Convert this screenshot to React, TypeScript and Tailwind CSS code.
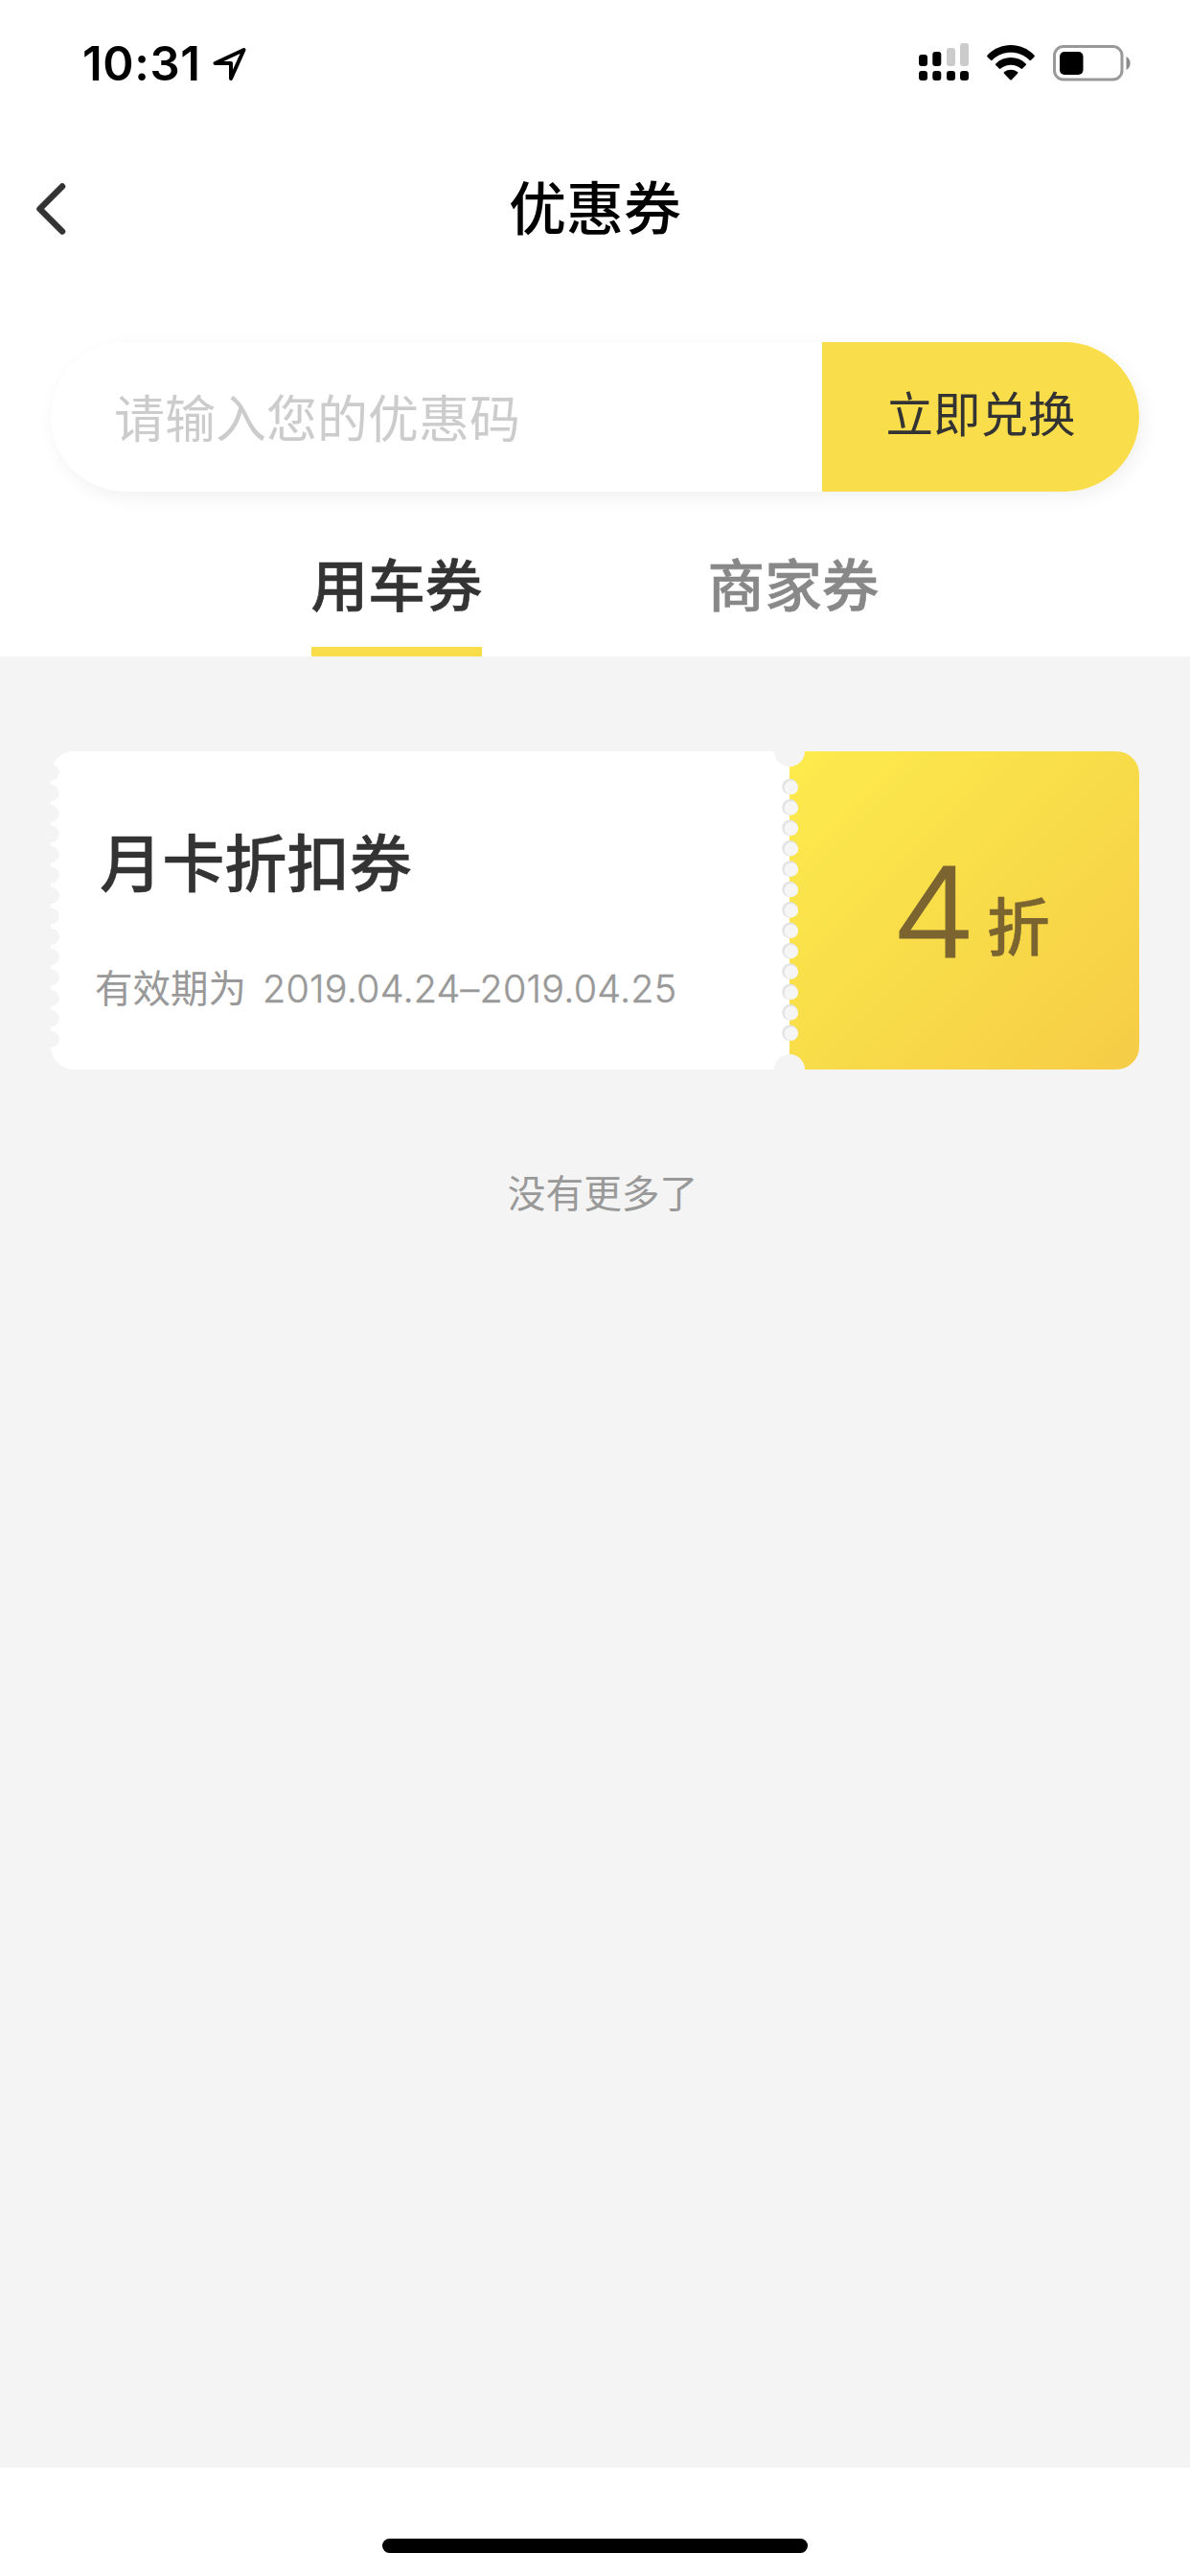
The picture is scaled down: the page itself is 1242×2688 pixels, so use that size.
import { useState } from "react";

const tabs = ["用车券", "商家券"];

const coupons = [
  {
    title: "月卡折扣券",
    period: "2019.04.24–2019.04.25",
    discount: "4",
  },
];

function StatusBar() {
  return (
    <div className="flex h-[132px] items-start justify-between pl-[86px] pr-[61px] pt-[42px]">
      <div className="flex items-start">
        <span className="font-['Inter'] text-[49px] leading-[49px] font-semibold tracking-[0.6px]">
          10:31
        </span>
        <svg className="mt-[6px] ml-[11px] h-[37px] w-[37px]" viewBox="0 0 37 37">
          <path
            d="M3.5 18 L33.5 4 L20 34 V18 Z"
            fill="none"
            stroke="#000"
            strokeWidth="4"
            strokeLinejoin="round"
          />
        </svg>
      </div>
      <div className="flex items-start">
        <svg className="mt-[3px] h-[40px] w-[52px]" viewBox="0 0 52 40">
          <g fill="#cbcbcb">
            <rect x="29" y="5" width="9" height="19" rx="3" />
            <rect x="43" y="0" width="9" height="24" rx="3" />
          </g>
          <rect x="0" y="12" width="9" height="12" rx="3" />
          <rect x="14.3" y="9" width="9" height="15" rx="3" />
          <rect x="0" y="29" width="9" height="10" rx="3" />
          <rect x="14.3" y="29" width="9" height="10" rx="3" />
          <rect x="29" y="29" width="9" height="10" rx="3" />
          <rect x="43" y="29" width="9" height="10" rx="3" />
        </svg>
        <svg className="mt-[5px] ml-[19px] h-[38px] w-[50px]" viewBox="0 0 50 38">
          <path d="M0.6 10.6 C14 -3.4 36 -3.4 49.4 10.6 Q50.2 11.5 49.4 12.4 L46 15.8 Q45.2 16.5 44.4 15.8 C33.5 5.2 16.5 5.2 5.6 15.8 Q4.8 16.5 4 15.8 L0.6 12.4 Q-0.2 11.5 0.6 10.6 Z" />
          <path d="M9.3 19.4 C18 10.9 32 10.9 40.7 19.4 Q41.5 20.3 40.7 21.1 L37.2 24.6 Q36.4 25.3 35.6 24.6 C29.5 19.3 20.5 19.3 14.4 24.6 Q13.6 25.3 12.8 24.6 L9.3 21.1 Q8.5 20.3 9.3 19.4 Z" />
          <path d="M18 28.1 C22 24.8 28 24.8 32 28.1 Q32.8 28.9 32 29.8 L25.8 36.2 Q25 37 24.2 36.2 L18 29.8 Q17.2 28.9 18 28.1 Z" />
        </svg>
        <svg className="mt-[5px] ml-[19px] h-[38px] w-[82px]" viewBox="0 0 82 38">
          <rect
            x="1.5"
            y="1.5"
            width="70.5"
            height="34.5"
            rx="9.5"
            fill="none"
            stroke="#999"
            strokeWidth="3"
          />
          <rect x="7" y="7" width="24.5" height="24" rx="5" />
          <path d="M76.5 12 C82 14.5 82 23.5 76.5 26 Z" fill="#8c8c8c" />
        </svg>
      </div>
    </div>
  );
}

function Header() {
  return (
    <div className="flex h-[172px] items-center px-[36px]">
      <button className="w-[60px]">
        <svg className="h-[56px] w-[36px]" viewBox="0 0 36 56">
          <path
            d="M29 4.5 L5.5 28 L29 51.5"
            fill="none"
            stroke="#333"
            strokeWidth="6.5"
            strokeLinecap="round"
            strokeLinejoin="round"
          />
        </svg>
      </button>
      <h1 className="mr-[60px] flex-1 pb-[9px] text-center text-[60px] leading-none font-medium">
        优惠券
      </h1>
    </div>
  );
}

function RedeemForm() {
  const [code, setCode] = useState("");

  return (
    <form
      className="mx-[53px] mt-[53px] flex h-[156px] rounded-full bg-white shadow-[4px_6px_20px_rgba(0,0,0,0.06)]"
      onSubmit={(e) => e.preventDefault()}
    >
      <input
        type="text"
        className="h-full w-[805px] rounded-l-full pb-[3px] pl-[66px] text-[53px] text-[#333] outline-none placeholder:text-[#ccc]"
        placeholder="请输入您的优惠码"
        value={code}
        onChange={(e) => setCode(e.target.value)}
      />
      <button
        type="submit"
        className="flex-1 rounded-r-full bg-[#f9dd4a] pb-[10px] text-[49.5px] leading-none text-[#333]"
      >
        立即兑换
      </button>
    </form>
  );
}

// row of holes punched along a ticket edge
const leftHoles = Array.from({ length: 14 }, (_, i) => 22 + i * 21.4);
const middleHoles = Array.from({ length: 13 }, (_, i) => 37 + i * 21.4);

function Coupon({ title, period, discount }: any) {
  return (
    <div className="relative flex h-[332px] overflow-hidden rounded-[24px]">
      <div className="w-[771px] bg-white pl-[46px]">
        <h2 className="mt-[80px] ml-[5px] text-[65.2px] leading-none font-medium text-[#333] [-webkit-text-stroke:0.4px]">
          {title}
        </h2>
        <p className="mt-[80px] flex items-baseline text-[39.5px] leading-none text-[#999]">
          有效期为
          <span className="ml-[17px] font-['Inter'] font-light tracking-[0.2px] [-webkit-text-stroke:0.4px]">
            {period}
          </span>
        </p>
      </div>
      <div className="flex flex-1 items-start bg-linear-135 from-[#fdeb4d] via-[#f8dc49] to-[#f6cc46] pl-[106px] text-[#7b6430]">
        <span className="mt-[103px] w-[84px] origin-left scale-x-[1.09] font-['Inter'] text-[130px] leading-none font-light [-webkit-text-stroke:1px]">
          {discount}
        </span>
        <span className="mt-[147px] ml-[16px] text-[65.8px] leading-none font-medium [-webkit-text-stroke:0.4px]">
          折
        </span>
      </div>
      <svg
        className="absolute top-0 left-0 h-[332px] w-[800px]"
        viewBox="0 0 800 332"
      >
        {leftHoles.map((y) => (
          <circle key={y} cx="0" cy={y} r="8.8" fill="#f4f4f4" />
        ))}
        <circle cx="771" cy="0" r="16" fill="#f4f4f4" />
        <circle cx="771" cy="332" r="16" fill="#f4f4f4" />
        {middleHoles.map((y) => (
          <g key={y}>
            <circle cx="771.5" cy={y} r="8.3" fill="#e3e3e3" />
            <circle cx="772.8" cy={y + 0.8} r="7.2" fill="#f6f6f6" />
          </g>
        ))}
      </svg>
    </div>
  );
}

export default function App() {
  const [active, setActive] = useState(0);

  return (
    <div className="flex h-[2688px] w-[1242px] flex-col bg-white font-['Noto_Sans_CJK_SC',sans-serif] text-black">
      <StatusBar />
      <Header />
      <RedeemForm />
      <div className="flex h-[172px] px-[207px]">
        {tabs.map((tab, i) => (
          <div key={tab} className="flex flex-1 justify-center">
            <button
              className={`h-full border-b-10 pt-[28px] text-[59.6px] leading-none font-medium [-webkit-text-stroke:0.6px] ${
                active === i
                  ? "border-[#f9dd4a] text-[#333]"
                  : "border-transparent text-[#888]"
              }`}
              onClick={() => setActive(i)}
            >
              {tab}
            </button>
          </div>
        ))}
      </div>
      <div className="flex-1 bg-[#f4f4f4] px-[53px] pt-[99px]">
        {coupons.map((coupon) => (
          <Coupon key={coupon.title} {...coupon} />
        ))}
        <p className="mt-[107px] pl-[16px] text-center text-[39.7px] leading-none text-[#999]">
          没有更多了
        </p>
      </div>
      <div className="flex h-[113px] justify-center pt-[74px]">
        <div className="h-[15px] w-[444px] rounded-full bg-black"></div>
      </div>
    </div>
  );
}
